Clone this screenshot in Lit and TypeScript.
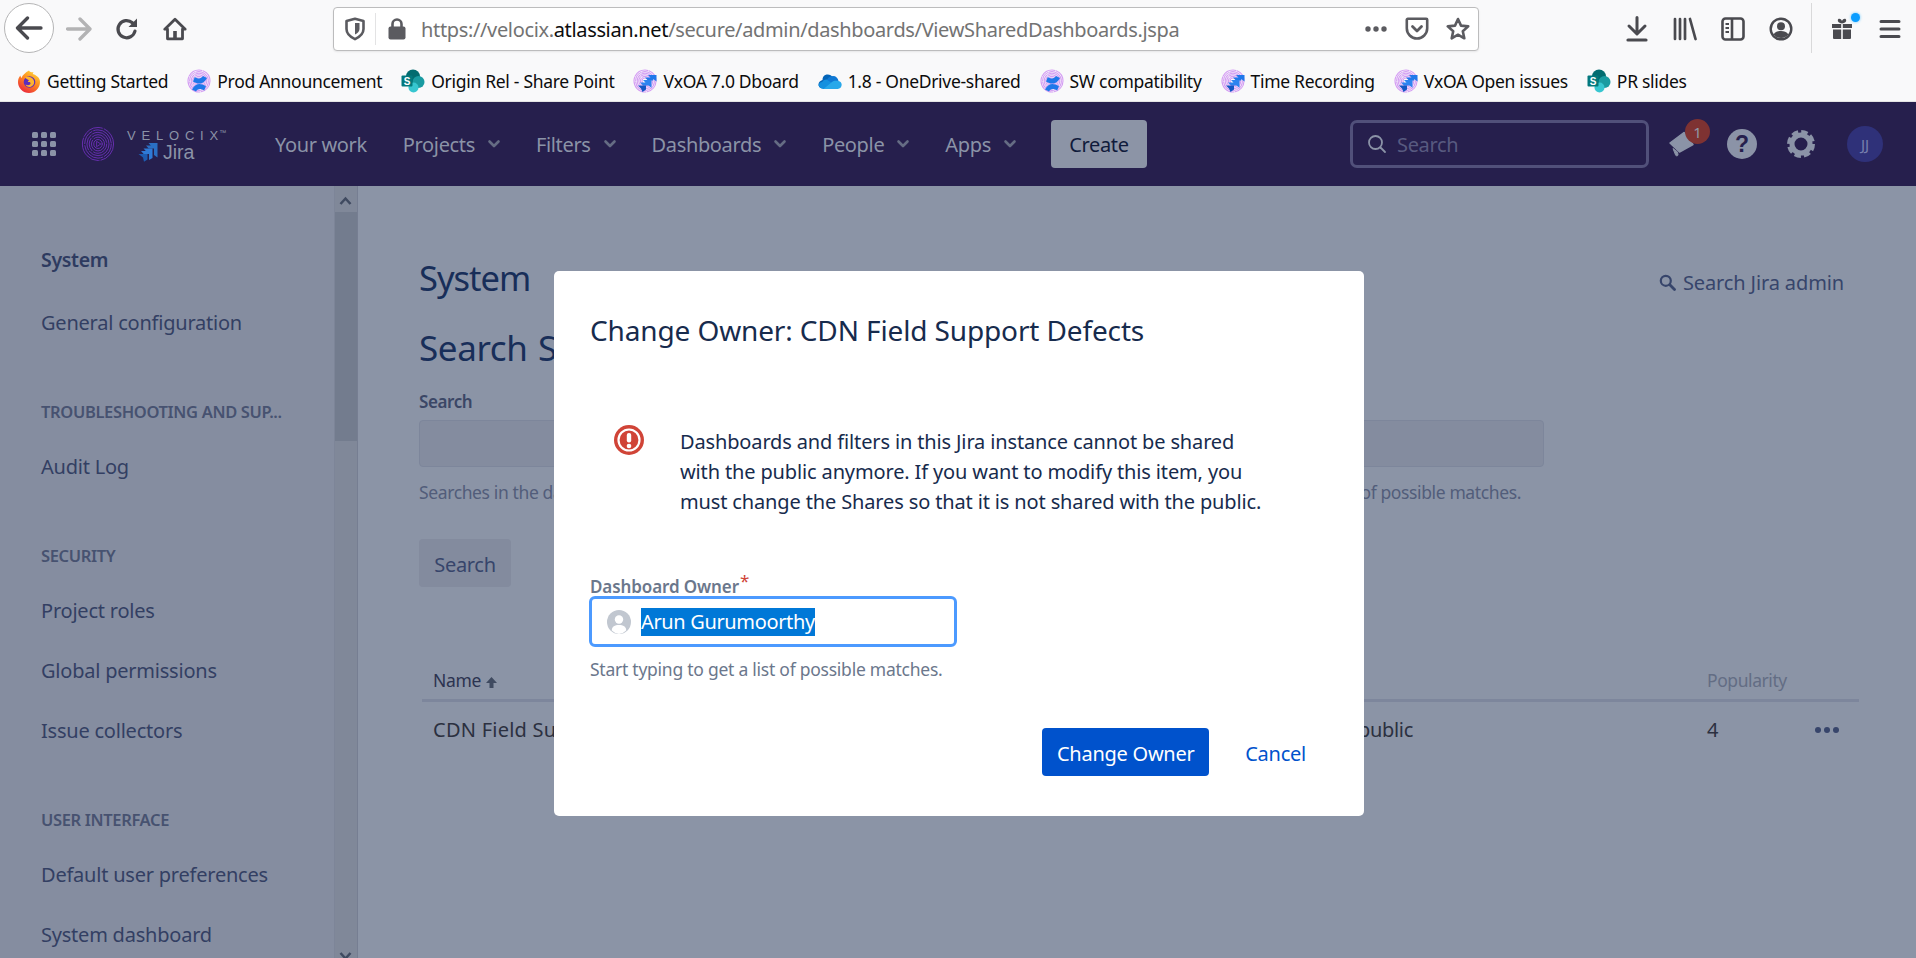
import { LitElement, html, css, svg } from "lit";
import { customElement } from "lit/decorators.js";

const fingerprintArcs = (color: string, w: number) => svg`
  <g fill="none" stroke=${color} stroke-width=${w} stroke-linecap="round">
    <circle cx="12" cy="12" r="11" stroke-dasharray="15 1.400 22 1.200"/>
    <circle cx="12" cy="12" r="9.400" stroke-dasharray="10 1.200 17 1.400"/>
    <circle cx="12" cy="12" r="7.800" stroke-dasharray="19 1.300 11 1.200"/>
    <circle cx="12" cy="12" r="6.200" stroke-dasharray="13 1.400 9 1.200"/>
    <circle cx="12" cy="12" r="4.600" stroke-dasharray="17 1.400"/>
    <circle cx="12" cy="12" r="3"/>
  </g>`;

const favFirefox = html`<svg class="fav" viewBox="0 0 24 24">
  <defs><linearGradient id="ff" x1="0.8" y1="0" x2="0.2" y2="1"><stop offset="0" stop-color="#ffdb3b"/><stop offset=".45" stop-color="#ff8a1f"/><stop offset="1" stop-color="#e9213f"/></linearGradient></defs>
  <path d="M12 1.500c1 1.800 3 2 4.500 1.800l-.8 1.700C20 6.500 23 9 23 13a11 11 0 1 1-22 0c0-3 1-5 2.500-6.500 0 1 .5 2 1 2.500C5.500 6 8.500 3.500 12 1.500z" fill="url(#ff)"/>
  <circle cx="12.500" cy="13" r="5.800" fill="#5b2dbd"/>
  <path d="M8 8.500c3-1.500 8-.5 9 3.500.8 3.500-2 6-4.500 6-2 0-3.500-1-4-2.500 1.500 1 3.500 1 4.500 0 1-1 .6-2.300-.5-2.600L11 13c-.5-.8.5-1.200 1-1.800C11 10.500 9.500 10 8 8.500z" fill="#ffb52e"/>
</svg>`;

const favConf = html`<svg class="fav" viewBox="0 0 24 24">
  ${fingerprintArcs("#d49df3", 1.100)}
  <path d="M5 20.500c3.500-6 7.500-7 14-3.500l-1.800 4.500c-4-2.300-6-2-8.200.9zM20 9c-3.500 6-7.500 7-14 3.500L7.800 8c4 2.300 6 2 8.200-.9z" fill="#1f78ea"/>
</svg>`;

const favJira = html`<svg class="fav" viewBox="0 0 24 24">
  ${fingerprintArcs("#d49df3", 1.100)}
  <path d="M23.500 6H15l2.500 2.500H12l3 3h5.200v-1.500l3.300 2.600z" fill="#1f78ea"/>
  <path d="M18.500 11H10l2.500 2.500H7l3 3h5.500l3 2.200z" fill="#2d84f0"/>
  <path d="M13 16.500H5l3 3 1.500 3.500 3.500-2.500z" fill="#1258c4"/>
</svg>`;

const favShare = html`<svg class="fav" viewBox="0 0 24 24">
  <circle cx="12" cy="7.500" r="7" fill="#036c70"/>
  <circle cx="17.500" cy="13" r="6" fill="#1a9ba1"/>
  <circle cx="12.500" cy="18.500" r="5" fill="#37c6d0"/>
  <rect x="0.500" y="6.500" width="11" height="11" rx="1" fill="#03787c"/>
  <text x="6" y="15.500" text-anchor="middle" font-family="Liberation Sans, sans-serif" font-weight="700" font-size="10" fill="#fff">S</text>
</svg>`;

const favDrive = html`<svg class="fav" viewBox="0 0 24 24">
  <path d="M9.500 17 15 8.500C13.500 6 11 5 8.500 5.500 5.800 6 4.300 8.500 4.500 11 2 11.500.5 13.500.5 15.500c0 1.500 1 3 2 3.500z" fill="#0364b8"/>
  <path d="M9 10.500c1.800-3 4-3.500 6-3.500 3 0 5 2 5.500 5L15 18 6 13z" fill="#0f78d4"/>
  <path d="M2.500 19c.8.600 1.800 1 3 1H20l-6-6-5.500-3.500c-2 0-4 1-4.200 2.500C2 13 0.500 15 .5 16.500z" fill="#1490df"/>
  <path d="M20.500 12c2 .2 3.200 2 3.200 3.800 0 2.200-1.700 4.200-4 4.200H5.500l8.500-7c1.500-1.500 4-1.500 6.500-1z" fill="#28a8ea"/>
</svg>`;

const bookmarks = [
  { icon: favFirefox, label: "Getting Started" },
  { icon: favConf, label: "Prod Announcement" },
  { icon: favShare, label: "Origin Rel - Share Point" },
  { icon: favJira, label: "VxOA 7.0 Dboard" },
  { icon: favDrive, label: "1.8 - OneDrive-shared" },
  { icon: favConf, label: "SW compatibility" },
  { icon: favJira, label: "Time Recording" },
  { icon: favJira, label: "VxOA Open issues" },
  { icon: favShare, label: "PR slides" },
];

const navItems = ["Projects", "Filters", "Dashboards", "People", "Apps"];

const sideGroups = [
  { head: "TROUBLESHOOTING AND SUP...", items: ["Audit Log"] },
  { head: "SECURITY", items: ["Project roles", "Global permissions", "Issue collectors"] },
  { head: "USER INTERFACE", items: ["Default user preferences", "System dashboard"] },
];

const chevron = html`<svg class="chev" viewBox="0 0 16 16"><path d="M3.500 5.500 8 10l4.500-4.500" fill="none" stroke="#656c84" stroke-width="2.600" stroke-linecap="round" stroke-linejoin="round"/></svg>`;

@customElement("app-root")
export class AppRoot extends LitElement {
  static styles = css`
    :host { display: block; width: 1916px; height: 958px; overflow: hidden; position: relative; font-family: "Noto Sans", "Open Sans", sans-serif; background: #8b94a6; }
    * { box-sizing: border-box; }
    .toolbar { height: 66px; background: #f9f9fa; display: flex; align-items: center; padding-left: 4px; }
    .back { width: 50px; height: 50px; border-radius: 50%; border: 1px solid #b5b5b6; background: #fff; display: flex; align-items: center; justify-content: center; margin-right: 1px; margin-top: -10px; flex: none; }
    .tb { width: 48px; height: 48px; display: flex; align-items: center; justify-content: center; flex: none; margin-top: -8px; position: relative; }
    .tb svg, .back svg { display: block; }
    .first { margin-left: 134px; }
    .dot { position: absolute; left: 33px; top: 8px; width: 9px; height: 9px; border-radius: 50%; background: #0a9dff; box-shadow: 0 0 3px #5cc4ff; }
    .url { margin-left: 134px; width: 1146px; height: 44px; border: 1px solid #bcbcbd; border-radius: 4px; background: #fff; display: flex; align-items: center; flex: none; margin-top: -8px; box-shadow: 0 1px 2px rgba(0,0,0,.08); }
    .ub { width: 41px; height: 42px; display: flex; align-items: center; justify-content: center; flex: none; }
    .sepv { width: 1px; height: 32px; background: #e3e3e4; flex: none; }
    .lock { margin-left: 12px; flex: none; display: block; }
    .urltext { margin-left: 15px; flex: 1; font-size: 20px; letter-spacing: -0.35px; color: #737373; white-space: nowrap; }
    .urltext b { font-weight: 400; color: #0c0c0d; }
    .tbsep { width: 1px; height: 50px; background: #d9d9da; margin: -10px 6px 0 6px; flex: none; }
    .marks { height: 36px; background: #f9f9fa; border-bottom: 1px solid #e4e4e5; display: flex; align-items: flex-start; padding-left: 17px; gap: 19px; }
    .mark { display: flex; align-items: center; gap: 6px; height: 30px; font-size: 17.500px; letter-spacing: -0.3px; color: #0c0c0d; white-space: nowrap; }
    .fav { width: 24px; height: 24px; flex: none; display: block; }
    .nav { height: 84px; background: #261f4d; display: flex; align-items: center; padding-left: 32px; position: relative; }
    .grid { width: 24px; height: 24px; display: grid; grid-template-columns: repeat(3, 6px); grid-auto-rows: 6px; gap: 3px; flex: none; }
    .grid i { background: #8b93a7; border-radius: 1.500px; }
    .logo { display: flex; align-items: center; margin-left: 25px; flex: none; width: 194px; }
    .fp { display: block; flex: none; }
    .brand { margin-left: 12px; display: flex; flex-direction: column; align-items: flex-start; width: 100px; padding-top: 4px; }
    .vel { font-size: 13px; color: #8b93a7; line-height: 13px; height: 13px; white-space: nowrap; font-family: "Liberation Sans", sans-serif; display: flex; align-items: flex-start; }
    .vl { letter-spacing: 5.800px; }
    .tm { font-size: 7px; line-height: 7px; margin-left: 1px; }
    .jira { display: flex; align-items: center; gap: 5px; font-size: 19.500px; line-height: 21px; color: #8b93a7; font-family: "Liberation Sans", sans-serif; margin-left: 11px; }
    .jira svg { display: block; }
    .navlist { display: flex; align-items: center; font-size: 20px; letter-spacing: -0.35px; color: #8b93a7; white-space: nowrap; }
    .nitem { display: flex; align-items: center; margin-left: 34px; }
    .nitem:first-child { margin-left: 0; }
    .nitem:nth-child(2) { margin-left: 36px; }
    .chev { width: 16px; height: 16px; margin-left: 11px; display: block; flex: none; }
    .create { margin-left: 33px; width: 96px; height: 48px; border-radius: 4px; background: #8c94a6; color: #101b3b; font-size: 20px; letter-spacing: -0.35px; display: flex; align-items: center; justify-content: center; }
    .navsearch { position: absolute; left: 1350px; top: 18px; width: 299px; height: 48px; border: 3px solid #51507a; border-radius: 7px; display: flex; align-items: center; padding-left: 14px; font-size: 20px; letter-spacing: -0.35px; }
    .navsearch span { margin-left: 10px; color: #585a80; }
    .navicons { position: absolute; left: 1664px; top: 0; height: 84px; display: flex; align-items: center; }
    .ni { width: 36px; height: 36px; display: flex; align-items: center; justify-content: center; position: relative; flex: none; }
    .ni2 { margin-left: 24px; }
    .ni3 { margin-left: 23px; }
    .ni svg { display: block; }
    .badge { position: absolute; left: 21px; top: -7px; width: 25px; height: 25px; border-radius: 50%; background: #7e3232; color: #8f96a6; font-size: 15px; display: flex; align-items: center; justify-content: center; }
    .avatar { width: 36px; height: 36px; border-radius: 50%; background: #2f3179; color: #777fae; font-size: 15px; display: flex; align-items: center; justify-content: center; margin-left: 28px; flex: none; }
    .body { display: flex; height: 772px; }
    .side { width: 334px; background: #858da0; padding: 41px 0 0 41px; flex: none; overflow: hidden; color: #333f63; font-size: 20px; letter-spacing: -0.22px; white-space: nowrap; }
    .stitle { height: 66px; line-height: 66px; font-weight: 600; color: #2e3b60; font-size: 19.500px; letter-spacing: -0.3px; }
    .sitem { height: 60px; line-height: 60px; }
    .shead { height: 50px; line-height: 50px; margin-top: 34px; font-size: 16.500px; font-weight: 600; color: #475270; letter-spacing: -0.35px; }
    .scroll { width: 24px; flex: none; background: #808899; border-left: 1px solid #7d8598; border-right: 1px solid #767e92; position: relative; }
    .thumb { position: absolute; left: 0; right: 0; top: 26px; height: 229px; background: #737c8e; }
    .sa { position: absolute; left: 4px; width: 13px; height: 10px; display: block; }
    .up { top: 10px; }
    .down { bottom: -3px; transform: scaleY(-1); }
    .main { flex: 1; padding: 69px 0 0 61px; color: #1a2f5c; font-size: 20px; letter-spacing: -0.3px; min-width: 0; }
    .mh { display: flex; justify-content: space-between; align-items: center; padding-right: 72px; height: 46px; }
    h1, h2 { font-weight: 400; margin: 0; font-size: 34.500px; letter-spacing: -1px; line-height: 46px; color: #182e59; white-space: nowrap; }
    h2 { margin-top: 24px; font-size: 35px; letter-spacing: -0.4px; word-spacing: 2px; }
    .adm { display: flex; align-items: center; gap: 7px; color: #37456b; margin-top: 8px; letter-spacing: -0.12px; }
    .adm svg { display: block; }
    .flabel { font-size: 17px; font-weight: 600; line-height: 22px; margin-top: 20px; color: #3b4766; letter-spacing: -0.4px; }
    .finput { margin-top: 7px; width: 1125px; height: 47px; background: #848c9f; border: 1px solid #7d869b; border-radius: 4px; }
    .fhelp { margin-top: 13px; width: 1102px; display: flex; justify-content: space-between; font-size: 17.500px; line-height: 24px; color: #525d7a; letter-spacing: -0.38px; }
    .sbtn { margin-top: 35px; width: 92px; height: 48px; padding-top: 2px; background: #838b9e; border-radius: 4px; display: flex; align-items: center; justify-content: center; color: #37456b; }
    .table { margin: 73px 0 0 3px; width: 1437px; }
    .tr { display: grid; grid-template-columns: 444px 830px 108px 24px; padding-left: 11px; align-items: center; white-space: nowrap; }
    .th { border-bottom: 3px solid #7d869c; height: 42px; font-size: 17.500px; letter-spacing: -0.3px; color: #2b3350; }
    .td { height: 54px; color: #2b3040; }
    .tname { letter-spacing: 0.25px; }
    .sortup { display: inline-block; margin-left: 5px; vertical-align: -1px; }
    .pop { color: #636d84; letter-spacing: -0.42px; }
    .pub { text-align: right; padding-right: 294px; }
    .dots { display: flex; gap: 3px; justify-content: center; margin-top: 2px; }
    .dots i { width: 6px; height: 6px; border-radius: 50%; background: #37456b; flex: none; }
    .modal { position: absolute; left: 554px; top: 271px; width: 810px; height: 545px; background: #fff; border-radius: 5px; padding: 43px 36px 0 36px; color: #172b4d; }
    .mtitle { margin: 0; font-size: 28px; font-weight: 400; line-height: 34px; letter-spacing: -0.13px; white-space: nowrap; position: relative; top: -1px; }
    .msg { display: flex; margin-top: 79px; padding-left: 24px; }
    .msg svg { flex: none; margin-top: -2px; display: block; }
    .msgt { margin-left: 36px; font-size: 20px; line-height: 30px; letter-spacing: -0.14px; white-space: nowrap; }
    .mlabel { margin-top: 59px; height: 22px; line-height: 22px; font-size: 17px; font-weight: 600; color: #6b778c; letter-spacing: -0.1px; display: flex; white-space: nowrap; }
    .star { color: #d04437; margin: -6px 0 0 1px; font-weight: 400; font-size: 17px; }
    .minput { margin: -2px 0 0 -1px; width: 368px; height: 51px; border: 3px solid #4c9aff; border-radius: 6px; display: flex; align-items: center; padding-left: 15px; }
    .minput svg { flex: none; display: block; }
    .sel { margin-left: 10px; background: #0078d7; color: #fff; font-size: 20px; line-height: 28px; letter-spacing: -0.35px; white-space: nowrap; display: block; height: 28px; }
    .mhelp { margin-top: 10px; font-size: 17.500px; line-height: 24px; color: #6b778c; letter-spacing: -0.25px; white-space: nowrap; }
    .mfoot { margin-top: 47px; margin-right: 22px; display: flex; justify-content: flex-end; align-items: center; gap: 36px; }
    .cbtn { width: 167px; height: 48px; padding-top: 2px; background: #0052cc; color: #fff; border-radius: 4px; display: flex; align-items: center; justify-content: center; font-size: 20px; letter-spacing: -0.25px; white-space: nowrap; }
    .cancel { color: #0052cc; font-size: 20px; letter-spacing: -0.25px; padding-top: 2px; }
  `;

  private renderToolbar() {
    const ic = "#4a4a4f";
    return html`<div class="toolbar">
      <div class="back"><svg width="28" height="24" viewBox="0 0 28 24"><path d="M26 12H3M12.500 2 2.500 12l10 10" fill="none" stroke=${ic} stroke-width="3.300" stroke-linecap="round" stroke-linejoin="round"/></svg></div>
      <div class="tb"><svg width="26" height="24" viewBox="0 0 26 24"><path d="M1.500 12h22M14 2l10 10-10 10" fill="none" stroke="#b3b3b4" stroke-width="3.300" stroke-linecap="round" stroke-linejoin="round"/></svg></div>
      <div class="tb"><svg width="24" height="24" viewBox="0 0 24 24"><path d="M20 14a8.600 8.600 0 1 1-2.600-8.200" fill="none" stroke=${ic} stroke-width="3.200" stroke-linecap="round"/><path d="M22 1.500V10h-8.500z" fill=${ic}/></svg></div>
      <div class="tb"><svg width="24" height="24" viewBox="0 0 24 24"><path d="M12 2.200 1.800 12.200h2.700v9.600h15v-9.600h2.700z" fill="none" stroke=${ic} stroke-width="2.800" stroke-linejoin="round"/><rect x="10.200" y="14" width="3.600" height="7" fill=${ic}/></svg></div>
      <div class="url">
        <div class="ub"><svg width="20" height="24" viewBox="0 0 20 24"><path d="M10 1.800 18.500 4v8c0 5-4 8-8.500 10.200C5.500 20 1.500 17 1.500 12V4z" fill="none" stroke="#5b5b60" stroke-width="2.600" stroke-linejoin="round"/><path d="M10 6h4.500v6c0 2.500-2 4.500-4.500 5.500z" fill="#5b5b60"/></svg></div>
        <div class="sepv"></div>
        <svg class="lock" width="18" height="22" viewBox="0 0 18 22"><path d="M4.500 9V6a4.500 4.500 0 0 1 9 0v3" fill="none" stroke="#5b5b60" stroke-width="2.600"/><rect x="0.500" y="8.500" width="17" height="13" rx="2" fill="#5b5b60"/></svg>
        <div class="urltext">https://velocix.<b>atlassian.net</b>/secure/admin/dashboards/ViewSharedDashboards.jspa</div>
        <div class="ub"><svg width="24" height="6" viewBox="0 0 24 6"><circle cx="4" cy="3" r="2.700" fill="#5b5b60"/><circle cx="12" cy="3" r="2.700" fill="#5b5b60"/><circle cx="20" cy="3" r="2.700" fill="#5b5b60"/></svg></div>
        <div class="ub"><svg width="24" height="24" viewBox="0 0 24 24"><path d="M2.800 1.800h18.400a1 1 0 0 1 1 1v8.500a10.200 10.200 0 0 1-20.400 0V2.800a1 1 0 0 1 1-1z" fill="none" stroke="#5b5b60" stroke-width="2.600" stroke-linejoin="round"/><path d="M7.500 9.500l4.500 4.500 4.500-4.500" fill="none" stroke="#5b5b60" stroke-width="2.800" stroke-linecap="round" stroke-linejoin="round"/></svg></div>
        <div class="ub"><svg width="24" height="24" viewBox="0 0 24 24"><path d="m12 2 3 6.600 7.200.8-5.400 4.800 1.500 7.100-6.300-3.600-6.300 3.600 1.500-7.100-5.400-4.800 7.200-.8z" fill="none" stroke="#5b5b60" stroke-width="2.600" stroke-linejoin="round"/></svg></div>
      </div>
      <div class="tb first"><svg width="24" height="26" viewBox="0 0 24 26"><path d="M12 1.500V17M4 10l8 8 8-8" fill="none" stroke=${ic} stroke-width="3" stroke-linecap="round" stroke-linejoin="round"/><path d="M3 24h18" stroke=${ic} stroke-width="3.200" stroke-linecap="round"/></svg></div>
      <div class="tb"><svg width="24" height="24" viewBox="0 0 24 24"><g stroke=${ic} stroke-width="2.700" stroke-linecap="round" fill="none"><path d="M2 2v20M7 2v20M12 2v20M17 2l5.500 20"/></g></svg></div>
      <div class="tb"><svg width="24" height="24" viewBox="0 0 24 24"><rect x="1.500" y="1.500" width="21" height="21" rx="3" fill="none" stroke=${ic} stroke-width="2.600"/><path d="M11 1.500v21" stroke=${ic} stroke-width="2.600"/><path d="M4.500 7h3.500M4.500 11h3.500M4.500 15h3.500" stroke=${ic} stroke-width="2"/></svg></div>
      <div class="tb"><svg width="24" height="24" viewBox="0 0 24 24"><circle cx="12" cy="12" r="10.300" fill="none" stroke=${ic} stroke-width="2.400"/><circle cx="12" cy="9.300" r="4" fill=${ic}/><path d="M4.500 17.500c2-3 4.500-3.500 7.500-3.500s5.500.5 7.500 3.500c-2 2.300-4.500 3.500-7.500 3.500s-5.500-1.200-7.500-3.500z" fill=${ic}/></svg></div>
      <div class="tbsep"></div>
      <div class="tb"><svg width="22" height="24" viewBox="0 0 22 24"><path d="M1 7h9.200v4H1zM11.800 7H21v4h-9.200zM2 12.500h8.200V22H3a1 1 0 0 1-1-1zM11.800 12.500H20V21a1 1 0 0 1-1 1h-7.200z" fill=${ic}/><path d="M11 6.500C8 6 6.500 4.800 6.800 3c.4-2 3.200-1.800 4.200 1 1-2.800 3.800-3 4.200-1 .3 1.800-1.200 3-4.200 3.500z" fill=${ic}/></svg><span class="dot"></span></div>
      <div class="tb"><svg width="22" height="20" viewBox="0 0 22 20"><path d="M2 2.500h18M2 10h18M2 17.500h18" stroke=${ic} stroke-width="3" stroke-linecap="round"/></svg></div>
    </div>`;
  }

  private renderNav() {
    return html`<div class="nav">
      <div class="grid">${Array.from({ length: 9 }, () => html`<i></i>`)}</div>
      <div class="logo">
        <svg class="fp" width="34" height="36" viewBox="0 0 24 24" preserveAspectRatio="none">
          ${fingerprintArcs("#6a2fb5", 0.65)}
          <path d="M11 10.200 14 12l-3 1.800z" fill="#261f4d" stroke="#6a2fb5" stroke-width="0.600"/>
        </svg>
        <div class="brand">
          <div class="vel"><span class="vl">VELOCI</span><span>X</span><span class="tm">™</span></div>
          <div class="jira">
            <svg width="20" height="19" viewBox="0 0 20 19"><path d="M19.500 0H10.500l2.300 2.500H8l2.700 3H16v6.500l3.500 2.500z" fill="#2a6fc4"/><path d="M14.500 5.500H5.500l2.300 2.500H3l2.700 3H11v6l3.500-2z" fill="#2f7ad6"/><path d="M9.500 11H.5l4.500 3.500 1 4.300 3.500-2.300z" fill="#1d5bb0"/></svg>
            <span>Jira</span>
          </div>
        </div>
      </div>
      <div class="navlist">
        <div class="nitem">Your work</div>
        ${navItems.map((n) => html`<div class="nitem">${n}${chevron}</div>`)}
        <div class="create">Create</div>
      </div>
      <div class="navsearch">
        <svg width="20" height="20" viewBox="0 0 20 20"><circle cx="8.500" cy="8.500" r="6.500" fill="none" stroke="#8b93a7" stroke-width="1.800"/><path d="M13.500 13.500 18 18" stroke="#8b93a7" stroke-width="1.800" stroke-linecap="round"/></svg>
        <span>Search</span>
      </div>
      <div class="navicons">
        <div class="ni">
          <svg width="36" height="36" viewBox="0 0 36 36"><path d="M6 17 20 6.500 29 18.500 15.500 26z" fill="#8b93a7" stroke="#8b93a7" stroke-width="1.500" stroke-linejoin="round"/><path d="M9 22.500l4.500 3.500.5 2.500c.3 1.300-1.500 1.800-2.300.8z" fill="#8b93a7" stroke="#8b93a7" stroke-linejoin="round"/></svg>
          <div class="badge">1</div>
        </div>
        <div class="ni ni2"><svg width="30" height="30" viewBox="0 0 30 30"><circle cx="15" cy="15" r="15" fill="#8b93a7"/><text x="15" y="23" text-anchor="middle" font-family="Liberation Sans, sans-serif" font-weight="700" font-size="23" fill="#261f4d">?</text></svg></div>
        <div class="ni ni3"><svg width="28" height="28" viewBox="0 0 28 28"><circle cx="14" cy="14" r="9" fill="none" stroke="#8b93a7" stroke-width="5"/><circle cx="14" cy="14" r="12" fill="none" stroke="#8b93a7" stroke-width="4" stroke-dasharray="6.400 3"/></svg></div>
        <div class="avatar">JJ</div>
      </div>
    </div>`;
  }

  private renderSide() {
    return html`<div class="side">
      <div class="stitle">System</div>
      <div class="sitem">General configuration</div>
      ${sideGroups.map(
        (g) => html`<div class="shead">${g.head}</div>${g.items.map((i) => html`<div class="sitem">${i}</div>`)}`
      )}
    </div>
    <div class="scroll">
      <div class="thumb"></div>
      <svg class="sa up" viewBox="0 0 13 10"><path d="M1.500 8 6.500 2.500l5 5.500" fill="none" stroke="#3f4a60" stroke-width="2.500"/></svg>
      <svg class="sa down" viewBox="0 0 13 10"><path d="M1.500 8 6.500 2.500l5 5.500" fill="none" stroke="#3f4a60" stroke-width="2.500"/></svg>
    </div>`;
  }

  private renderMain() {
    return html`<div class="main">
      <div class="mh">
        <h1>System</h1>
        <div class="adm"><svg width="17" height="17" viewBox="0 0 17 17"><circle cx="6.800" cy="6.800" r="5" fill="none" stroke="#37456b" stroke-width="2.200"/><path d="M10.800 10.800 15.500 15.500" stroke="#37456b" stroke-width="2.800" stroke-linecap="round"/></svg><span>Search Jira admin</span></div>
      </div>
      <h2>Search S</h2>
      <div class="flabel">Search</div>
      <div class="finput"></div>
      <div class="fhelp"><span>Searches in the dashboard</span><span>of possible matches.</span></div>
      <div class="sbtn">Search</div>
      <div class="table">
        <div class="tr th">
          <span>Name<svg class="sortup" width="11" height="11" viewBox="0 0 11 11"><path d="M5.500 0 11 6H7.500v5h-4V6H0z" fill="#3f4a60"/></svg></span>
          <span></span>
          <span class="pop">Popularity</span>
          <span></span>
        </div>
        <div class="tr td">
          <span class="tname">CDN Field Support Defects</span>
          <span class="pub">public</span>
          <span>4</span>
          <span class="dots"><i></i><i></i><i></i></span>
        </div>
      </div>
    </div>`;
  }

  private renderModal() {
    return html`<div class="modal">
      <h3 class="mtitle">Change Owner: CDN Field Support Defects</h3>
      <div class="msg">
        <svg width="30" height="30" viewBox="0 0 30 30"><circle cx="15" cy="15" r="15" fill="#d04437"/><circle cx="15" cy="15" r="10.500" fill="none" stroke="#fff" stroke-width="2.200"/><rect x="12.800" y="8" width="4.400" height="9.500" rx="2" fill="#fff"/><circle cx="15" cy="21" r="2.300" fill="#fff"/></svg>
        <div class="msgt">Dashboards and filters in this Jira instance cannot be shared<br />with the public anymore. If you want to modify this item, you<br />must change the Shares so that it is not shared with the public.</div>
      </div>
      <div class="mlabel">Dashboard Owner<span class="star">*</span></div>
      <div class="minput">
        <svg width="24" height="24" viewBox="0 0 24 24"><circle cx="12" cy="12" r="12" fill="#c1c7d0"/><circle cx="12" cy="9.500" r="4.200" fill="#fff"/><path d="M4.800 20.500c0-4 3-5.500 7.200-5.500s7.200 1.500 7.200 5.500A12 12 0 0 1 12 24a12 12 0 0 1-7.200-3.500z" fill="#fff"/></svg>
        <span class="sel">Arun Gurumoorthy</span>
      </div>
      <div class="mhelp">Start typing to get a list of possible matches.</div>
      <div class="mfoot"><div class="cbtn">Change Owner</div><div class="cancel">Cancel</div></div>
    </div>`;
  }

  render() {
    return html`
      ${this.renderToolbar()}
      <div class="marks">
        ${bookmarks.map((b) => html`<div class="mark">${b.icon}<span>${b.label}</span></div>`)}
      </div>
      ${this.renderNav()}
      <div class="body">${this.renderSide()}${this.renderMain()}</div>
      ${this.renderModal()}
    `;
  }
}
